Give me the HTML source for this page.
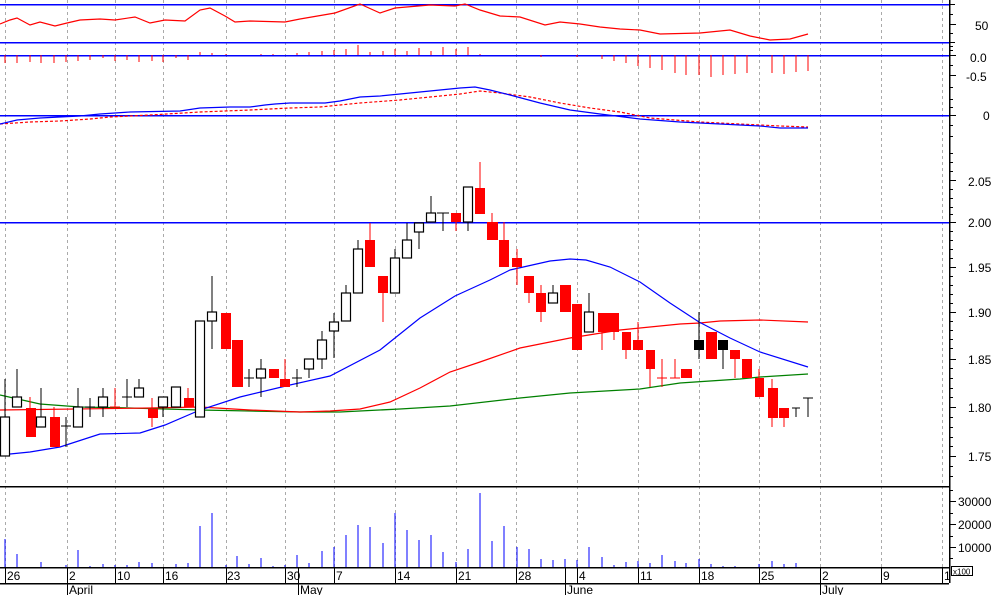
<!DOCTYPE html>
<html><head><meta charset="utf-8"><style>
html,body{margin:0;padding:0;background:#fff;}
svg{display:block;font-family:"Liberation Sans",sans-serif;}
text{font-size:12px;fill:#000;}
</style></head><body>
<svg width="994" height="595" viewBox="0 0 994 595" xmlns="http://www.w3.org/2000/svg">
<!-- grid dashed verticals -->
<g stroke="#aaa" stroke-width="1" stroke-dasharray="3,3" shape-rendering="crispEdges">
<line x1="5.5" y1="0" x2="5.5" y2="567"/><line x1="67.5" y1="0" x2="67.5" y2="567"/><line x1="115.5" y1="0" x2="115.5" y2="567"/><line x1="163.5" y1="0" x2="163.5" y2="567"/><line x1="226.5" y1="0" x2="226.5" y2="567"/><line x1="285.5" y1="0" x2="285.5" y2="567"/><line x1="334.5" y1="0" x2="334.5" y2="567"/><line x1="395.5" y1="0" x2="395.5" y2="567"/><line x1="456.5" y1="0" x2="456.5" y2="567"/><line x1="516.5" y1="0" x2="516.5" y2="567"/><line x1="577.5" y1="0" x2="577.5" y2="567"/><line x1="638.5" y1="0" x2="638.5" y2="567"/><line x1="699.5" y1="0" x2="699.5" y2="567"/><line x1="759.5" y1="0" x2="759.5" y2="567"/><line x1="820.5" y1="0" x2="820.5" y2="567"/><line x1="881.5" y1="0" x2="881.5" y2="567"/><line x1="942.5" y1="0" x2="942.5" y2="567"/>
</g>
<!-- blue horizontal lines -->
<g stroke="#0000ff" stroke-width="1.5" shape-rendering="crispEdges">
<line x1="0" y1="4.5" x2="949" y2="4.5"/><line x1="0" y1="42.5" x2="949" y2="42.5"/><line x1="0" y1="55.5" x2="949" y2="55.5"/><line x1="0" y1="115.5" x2="949" y2="115.5"/><line x1="0" y1="222.5" x2="949" y2="222.5"/>
</g>
<!-- black lines -->
<g stroke="#000" stroke-width="1.5" shape-rendering="crispEdges">
<line x1="0" y1="486.5" x2="949" y2="486.5"/>
<line x1="0" y1="567.5" x2="949" y2="567.5"/>
<line x1="0" y1="583.5" x2="949" y2="583.5"/>
<line x1="949.5" y1="0" x2="949.5" y2="583"/>
</g>
<g stroke="#000" stroke-width="1" shape-rendering="crispEdges">
<!-- date ticks -->
<line x1="5.5" y1="567" x2="5.5" y2="583"/><line x1="67.5" y1="567" x2="67.5" y2="595"/><line x1="115.5" y1="567" x2="115.5" y2="583"/><line x1="163.5" y1="567" x2="163.5" y2="583"/><line x1="226.5" y1="567" x2="226.5" y2="583"/><line x1="285.5" y1="567" x2="285.5" y2="583"/><line x1="298.5" y1="567" x2="298.5" y2="595"/><line x1="334.5" y1="567" x2="334.5" y2="583"/><line x1="395.5" y1="567" x2="395.5" y2="583"/><line x1="456.5" y1="567" x2="456.5" y2="583"/><line x1="516.5" y1="567" x2="516.5" y2="583"/><line x1="565.5" y1="567" x2="565.5" y2="595"/><line x1="577.5" y1="567" x2="577.5" y2="583"/><line x1="638.5" y1="567" x2="638.5" y2="583"/><line x1="699.5" y1="567" x2="699.5" y2="583"/><line x1="759.5" y1="567" x2="759.5" y2="583"/><line x1="820.5" y1="567" x2="820.5" y2="595"/><line x1="881.5" y1="567" x2="881.5" y2="583"/><line x1="942.5" y1="567" x2="942.5" y2="583"/>
<!-- axis ticks -->
<line x1="949" y1="4.5" x2="955" y2="4.5"/><line x1="949" y1="14.5" x2="953" y2="14.5"/><line x1="949" y1="24.5" x2="956" y2="24.5"/><line x1="949" y1="33.5" x2="953" y2="33.5"/><line x1="949" y1="42.5" x2="955" y2="42.5"/><line x1="949" y1="46.5" x2="953" y2="46.5"/><line x1="949" y1="50.5" x2="953" y2="50.5"/>
<line x1="949" y1="55.5" x2="956" y2="55.5"/><line x1="949" y1="65.5" x2="953" y2="65.5"/><line x1="949" y1="75.5" x2="956" y2="75.5"/><line x1="949" y1="87.5" x2="953" y2="87.5"/><line x1="949" y1="99.5" x2="953" y2="99.5"/><line x1="949" y1="107.5" x2="953" y2="107.5"/><line x1="949" y1="115.5" x2="956" y2="115.5"/><line x1="949" y1="125.5" x2="953" y2="125.5"/><line x1="949" y1="136.5" x2="953" y2="136.5"/>
<line x1="949" y1="153.5" x2="953" y2="153.5"/><line x1="949" y1="162.5" x2="953" y2="162.5"/><line x1="949" y1="171.5" x2="953" y2="171.5"/><line x1="949" y1="180.5" x2="956" y2="180.5"/><line x1="949" y1="189.5" x2="953" y2="189.5"/><line x1="949" y1="198.5" x2="953" y2="198.5"/><line x1="949" y1="207.5" x2="953" y2="207.5"/><line x1="949" y1="214.5" x2="953" y2="214.5"/><line x1="949" y1="222.5" x2="956" y2="222.5"/><line x1="949" y1="231.5" x2="953" y2="231.5"/><line x1="949" y1="240.5" x2="953" y2="240.5"/><line x1="949" y1="249.5" x2="953" y2="249.5"/><line x1="949" y1="258.5" x2="953" y2="258.5"/><line x1="949" y1="267.5" x2="956" y2="267.5"/><line x1="949" y1="276.5" x2="953" y2="276.5"/><line x1="949" y1="285.5" x2="953" y2="285.5"/><line x1="949" y1="294.5" x2="953" y2="294.5"/><line x1="949" y1="303.5" x2="953" y2="303.5"/><line x1="949" y1="312.5" x2="956" y2="312.5"/><line x1="949" y1="321.5" x2="953" y2="321.5"/><line x1="949" y1="330.5" x2="953" y2="330.5"/><line x1="949" y1="339.5" x2="953" y2="339.5"/><line x1="949" y1="348.5" x2="953" y2="348.5"/><line x1="949" y1="359.5" x2="956" y2="359.5"/><line x1="949" y1="368.5" x2="953" y2="368.5"/><line x1="949" y1="378.5" x2="953" y2="378.5"/><line x1="949" y1="388.5" x2="953" y2="388.5"/><line x1="949" y1="397.5" x2="953" y2="397.5"/><line x1="949" y1="407.5" x2="956" y2="407.5"/><line x1="949" y1="417.5" x2="953" y2="417.5"/><line x1="949" y1="427.5" x2="953" y2="427.5"/><line x1="949" y1="437.5" x2="953" y2="437.5"/><line x1="949" y1="446.5" x2="953" y2="446.5"/><line x1="949" y1="456.5" x2="956" y2="456.5"/><line x1="949" y1="466.5" x2="953" y2="466.5"/><line x1="949" y1="476.5" x2="953" y2="476.5"/>
<line x1="949" y1="490.5" x2="953" y2="490.5"/><line x1="949" y1="501.5" x2="956" y2="501.5"/><line x1="949" y1="513.5" x2="953" y2="513.5"/><line x1="949" y1="524.5" x2="956" y2="524.5"/><line x1="949" y1="536.5" x2="953" y2="536.5"/><line x1="949" y1="547.5" x2="956" y2="547.5"/><line x1="949" y1="558.5" x2="953" y2="558.5"/>
</g>
<rect x="951.5" y="566.5" width="21" height="9" fill="#fff" stroke="#000" stroke-width="1"/>
<text x="953" y="574.5" style="font-size:8px">x100</text>
<!-- axis labels -->
<g>
<text x="975" y="30">50</text>
<text x="970" y="62">0.0</text>
<text x="966" y="81">-0.5</text>
<text x="983" y="120">0</text>
<text x="968" y="186">2.05</text>
<text x="968" y="227">2.00</text>
<text x="968" y="272">1.95</text>
<text x="968" y="317">1.90</text>
<text x="968" y="364">1.85</text>
<text x="968" y="412">1.80</text>
<text x="968" y="461">1.75</text>
<text x="958" y="506">30000</text>
<text x="958" y="529">20000</text>
<text x="958" y="552">10000</text>
</g>
<!-- date labels -->
<g>
<text x="7" y="580">26</text><text x="69" y="580">2</text><text x="117" y="580">10</text><text x="165" y="580">16</text><text x="227" y="580">23</text><text x="287" y="580">30</text><text x="336" y="580">7</text><text x="397" y="580">14</text><text x="458" y="580">21</text><text x="518" y="580">28</text><text x="579" y="580">4</text><text x="640" y="580">11</text><text x="701" y="580">18</text><text x="761" y="580">25</text><text x="822" y="580">2</text><text x="883" y="580">9</text><text x="944" y="580">1</text>
<text x="69" y="594">April</text><text x="300" y="594">May</text><text x="567" y="594">June</text><text x="822" y="594">July</text>
</g>
<!-- RSI line -->
<polyline fill="none" stroke="#ff0000" stroke-width="1.2" points="0,24 10,20 17,18 30,25 40,22 55,26 67,23 80,20 100,19 115,20 135,17 150,23 165,20 185,21 200,10 210,8 225,16 235,22 250,21 285,22 300,19 335,13 360,4 380,13 395,8 430,5 455,6 465,4 480,10 500,16 520,17 545,25 560,22 580,24 600,27 620,29 640,30 660,34 700,33 730,30 750,36 770,40 790,39 808,34"/>
<!-- histogram -->
<g stroke="#ff0000" stroke-width="1.2" shape-rendering="crispEdges">
<line x1="5" y1="55" x2="5" y2="63"/><line x1="17" y1="55" x2="17" y2="63"/><line x1="30" y1="55" x2="30" y2="62"/><line x1="41" y1="55" x2="41" y2="63"/><line x1="54" y1="55" x2="54" y2="63"/><line x1="66" y1="55" x2="66" y2="62"/><line x1="78" y1="55" x2="78" y2="61"/><line x1="90" y1="55" x2="90" y2="60"/><line x1="103" y1="55" x2="103" y2="58"/><line x1="115" y1="55" x2="115" y2="61"/><line x1="127" y1="55" x2="127" y2="60"/><line x1="139" y1="55" x2="139" y2="62"/><line x1="152" y1="55" x2="152" y2="61"/><line x1="163" y1="55" x2="163" y2="62"/><line x1="176" y1="55" x2="176" y2="58"/><line x1="188" y1="55" x2="188" y2="60"/>
<line x1="200" y1="55" x2="200" y2="52"/><line x1="212" y1="55" x2="212" y2="53"/><line x1="226" y1="55" x2="226" y2="54"/><line x1="261" y1="55" x2="261" y2="54"/><line x1="273" y1="55" x2="273" y2="54"/><line x1="297" y1="55" x2="297" y2="53"/><line x1="309" y1="55" x2="309" y2="52"/><line x1="322" y1="55" x2="322" y2="51"/><line x1="334" y1="55" x2="334" y2="50"/><line x1="346" y1="55" x2="346" y2="49"/><line x1="358" y1="55" x2="358" y2="45"/><line x1="370" y1="55" x2="370" y2="52"/><line x1="383" y1="55" x2="383" y2="51"/><line x1="395" y1="55" x2="395" y2="49"/><line x1="407" y1="55" x2="407" y2="51"/><line x1="419" y1="55" x2="419" y2="48"/><line x1="431" y1="55" x2="431" y2="51"/><line x1="443" y1="55" x2="443" y2="47"/><line x1="456" y1="55" x2="456" y2="49"/><line x1="468" y1="55" x2="468" y2="47"/><line x1="480" y1="55" x2="480" y2="54"/>
<line x1="541" y1="55" x2="541" y2="57"/><line x1="577" y1="55" x2="577" y2="57"/><line x1="602" y1="55" x2="602" y2="59"/><line x1="614" y1="55" x2="614" y2="61"/><line x1="626" y1="55" x2="626" y2="63"/><line x1="638" y1="55" x2="638" y2="66"/><line x1="650" y1="55" x2="650" y2="68"/><line x1="662" y1="55" x2="662" y2="70"/><line x1="675" y1="55" x2="675" y2="73"/><line x1="686" y1="55" x2="686" y2="75"/><line x1="699" y1="55" x2="699" y2="75"/><line x1="711" y1="55" x2="711" y2="77"/><line x1="723" y1="55" x2="723" y2="75"/><line x1="735" y1="55" x2="735" y2="74"/><line x1="747" y1="55" x2="747" y2="73"/><line x1="772" y1="55" x2="772" y2="73"/><line x1="784" y1="55" x2="784" y2="74"/><line x1="796" y1="55" x2="796" y2="72"/><line x1="808" y1="55" x2="808" y2="71"/>
</g>
<!-- MACD lines -->
<polyline fill="none" stroke="#ff0000" stroke-width="1.2" stroke-dasharray="3,2" points="0,124 30,122 60,121 90,119 110,117 150,115 200,112 250,110 290,108 320,107 340,105 360,103 400,100 430,97 460,94 480,91 500,93 530,97 560,103 590,108 620,112 650,118 700,122 740,124 780,126 808,127"/>
<polyline fill="none" stroke="#0000ff" stroke-width="1.2" points="0,124 17,120 40,118 60,117 80,116 100,114 130,112 180,111 200,108 230,107 250,107 265,105 275,104 290,103 325,103 340,101 360,97 380,96 400,94 420,92 440,90 460,88 475,87 490,90 510,95 540,103 570,110 600,114 640,119 680,122 720,124 760,126 780,128 808,128"/>
<!-- MAs -->
<polyline fill="none" stroke="#008000" stroke-width="1.3" points="0,395 40,404 80,407 130,408 200,410 250,411 300,412 340,412 400,409 450,406 520,398 570,393 640,389 680,383 740,379 760,377 808,374"/>
<polyline fill="none" stroke="#ff0000" stroke-width="1.2" points="0,410 150,408 200,407 250,410 300,412 330,411 360,409 390,402 420,388 450,372 480,362 520,348 570,338 620,330 680,324 700,323 720,321 760,320 808,322"/>
<polyline fill="none" stroke="#0000ff" stroke-width="1.2" points="0,455 30,452 60,447 100,434 140,433 165,425 200,410 240,397 290,385 330,376 380,350 420,318 455,296 490,280 510,270 550,261 570,259 586,260 610,267 640,282 670,303 699,322 730,338 760,352 808,367"/>
<!-- candles: wicks -->
<g stroke="#000" stroke-width="1.2" shape-rendering="crispEdges">
<line x1="5" y1="379" x2="5" y2="456"/><line x1="17" y1="369" x2="17" y2="407"/><line x1="41" y1="388" x2="41" y2="427"/><line x1="66" y1="417" x2="66" y2="447"/><line x1="61" y1="426" x2="71" y2="426"/><line x1="78" y1="388" x2="78" y2="427"/><line x1="90" y1="398" x2="90" y2="417"/><line x1="85" y1="407" x2="95" y2="407"/><line x1="103" y1="388" x2="103" y2="417"/><line x1="127" y1="379" x2="127" y2="407"/><line x1="122" y1="397" x2="132" y2="397"/><line x1="139" y1="379" x2="139" y2="397"/><line x1="163" y1="397" x2="163" y2="417"/><line x1="212" y1="276" x2="212" y2="349"/><line x1="249" y1="369" x2="249" y2="387"/><line x1="244" y1="378" x2="254" y2="378"/><line x1="261" y1="359" x2="261" y2="397"/><line x1="297" y1="369" x2="297" y2="387"/><line x1="292" y1="378" x2="302" y2="378"/><line x1="309" y1="359" x2="309" y2="378"/><line x1="322" y1="331" x2="322" y2="369"/><line x1="334" y1="313" x2="334" y2="358"/><line x1="346" y1="285" x2="346" y2="321"/><line x1="358" y1="240" x2="358" y2="293"/><line x1="395" y1="249" x2="395" y2="293"/><line x1="407" y1="223" x2="407" y2="258"/><line x1="419" y1="223" x2="419" y2="249"/><line x1="431" y1="196" x2="431" y2="222"/><line x1="443" y1="213" x2="443" y2="231"/><line x1="437" y1="213" x2="449" y2="213"/><line x1="468" y1="187" x2="468" y2="231"/><line x1="553" y1="285" x2="553" y2="303"/><line x1="589" y1="293" x2="589" y2="332"/><line x1="699" y1="312" x2="699" y2="359"/><line x1="723" y1="340" x2="723" y2="369"/><line x1="796" y1="408" x2="796" y2="417"/><line x1="792" y1="408" x2="800" y2="408"/><line x1="808" y1="398" x2="808" y2="417"/><line x1="803" y1="398" x2="813" y2="398"/>
</g>
<g stroke="#ff0000" stroke-width="1.2" shape-rendering="crispEdges">
<line x1="30" y1="397" x2="30" y2="437"/><line x1="54" y1="407" x2="54" y2="447"/><line x1="115" y1="388" x2="115" y2="408"/><line x1="110" y1="407" x2="120" y2="407"/><line x1="152" y1="398" x2="152" y2="427"/><line x1="188" y1="388" x2="188" y2="407"/><line x1="285" y1="359" x2="285" y2="387"/><line x1="370" y1="223" x2="370" y2="267"/><line x1="383" y1="276" x2="383" y2="322"/><line x1="456" y1="213" x2="456" y2="231"/><line x1="480" y1="162" x2="480" y2="214"/><line x1="492" y1="213" x2="492" y2="240"/><line x1="504" y1="222" x2="504" y2="267"/><line x1="517" y1="249" x2="517" y2="285"/><line x1="529" y1="276" x2="529" y2="303"/><line x1="541" y1="285" x2="541" y2="322"/><line x1="602" y1="313" x2="602" y2="350"/><line x1="614" y1="313" x2="614" y2="340"/><line x1="626" y1="332" x2="626" y2="359"/><line x1="638" y1="322" x2="638" y2="350"/><line x1="650" y1="350" x2="650" y2="387"/><line x1="662" y1="359" x2="662" y2="387"/><line x1="657" y1="378" x2="667" y2="378"/><line x1="675" y1="359" x2="675" y2="378"/><line x1="670" y1="378" x2="680" y2="378"/><line x1="711" y1="332" x2="711" y2="359"/><line x1="735" y1="350" x2="735" y2="378"/><line x1="759" y1="369" x2="759" y2="397"/><line x1="772" y1="379" x2="772" y2="427"/><line x1="784" y1="408" x2="784" y2="427"/>
</g>
<!-- red bodies -->
<g fill="#ff0000">
<rect x="26" y="408" width="10" height="29"/><rect x="50" y="417" width="10" height="30"/><rect x="148" y="409" width="10" height="9"/><rect x="184" y="398" width="10" height="9"/><rect x="221" y="313" width="10" height="36"/><rect x="232" y="340" width="11" height="47"/><rect x="269" y="369" width="10" height="9"/><rect x="280" y="379" width="10" height="8"/><rect x="365" y="240" width="10" height="27"/><rect x="378" y="276" width="10" height="17"/><rect x="451" y="213" width="10" height="9"/><rect x="475" y="188" width="10" height="26"/><rect x="487" y="222" width="11" height="18"/><rect x="499" y="240" width="10" height="27"/><rect x="512" y="258" width="10" height="9"/><rect x="524" y="276" width="10" height="17"/><rect x="536" y="293" width="10" height="19"/><rect x="560" y="285" width="11" height="27"/><rect x="572" y="304" width="10" height="46"/><rect x="598" y="313" width="21" height="19"/><rect x="622" y="332" width="9" height="18"/><rect x="633" y="340" width="10" height="10"/><rect x="646" y="350" width="9" height="19"/><rect x="681" y="369" width="11" height="9"/><rect x="706" y="332" width="11" height="27"/><rect x="730" y="350" width="10" height="9"/><rect x="742" y="359" width="10" height="19"/><rect x="755" y="378" width="9" height="19"/><rect x="768" y="388" width="10" height="30"/><rect x="779" y="408" width="10" height="10"/>
</g>
<!-- black bodies -->
<g fill="#000"><rect x="694" y="340" width="10" height="10"/><rect x="718" y="340" width="10" height="10"/></g>
<!-- white bodies -->
<g fill="#fff" stroke="#000" stroke-width="1.2">
<rect x="0.5" y="417" width="9" height="39"/><rect x="12.5" y="397" width="9" height="10"/><rect x="36.5" y="417" width="9" height="10"/><rect x="73.5" y="407" width="9" height="20"/><rect x="98.5" y="397" width="9" height="10"/><rect x="134.5" y="388" width="9" height="9"/><rect x="158.5" y="397" width="9" height="10"/><rect x="171.5" y="387" width="9" height="20"/><rect x="195.5" y="321" width="9" height="96"/><rect x="207.5" y="312" width="9" height="9"/><rect x="256.5" y="369" width="9" height="9"/><rect x="304.5" y="359" width="9" height="10"/><rect x="317.5" y="340" width="9" height="19"/><rect x="329.5" y="322" width="9" height="9"/><rect x="341.5" y="293" width="9" height="28"/><rect x="353.5" y="249" width="9" height="44"/><rect x="390.5" y="258" width="9" height="35"/><rect x="402.5" y="240" width="9" height="18"/><rect x="414.5" y="223" width="9" height="9"/><rect x="426.5" y="213" width="9" height="9"/><rect x="463.5" y="187" width="9" height="35"/><rect x="548.5" y="293" width="9" height="10"/><rect x="584.5" y="312" width="9" height="20"/>
</g>
<!-- volume -->
<g stroke="#0000ff" stroke-width="1.3" shape-rendering="crispEdges">
<line x1="5" y1="567" x2="5" y2="539"/><line x1="17" y1="567" x2="17" y2="554"/><line x1="41" y1="567" x2="41" y2="562"/><line x1="66" y1="567" x2="66" y2="565"/><line x1="78" y1="567" x2="78" y2="550"/><line x1="90" y1="567" x2="90" y2="566"/><line x1="103" y1="567" x2="103" y2="564"/><line x1="115" y1="567" x2="115" y2="565"/><line x1="127" y1="567" x2="127" y2="565"/><line x1="139" y1="567" x2="139" y2="562"/><line x1="152" y1="567" x2="152" y2="563"/><line x1="176" y1="567" x2="176" y2="564"/><line x1="188" y1="567" x2="188" y2="563"/><line x1="200" y1="567" x2="200" y2="526"/><line x1="212" y1="567" x2="212" y2="513"/><line x1="226" y1="567" x2="226" y2="565"/><line x1="237" y1="567" x2="237" y2="556"/><line x1="249" y1="567" x2="249" y2="564"/><line x1="261" y1="567" x2="261" y2="558"/><line x1="273" y1="567" x2="273" y2="566"/><line x1="285" y1="567" x2="285" y2="565"/><line x1="297" y1="567" x2="297" y2="555"/><line x1="309" y1="567" x2="309" y2="563"/><line x1="322" y1="567" x2="322" y2="551"/><line x1="334" y1="567" x2="334" y2="547"/><line x1="346" y1="567" x2="346" y2="535"/><line x1="358" y1="567" x2="358" y2="525"/><line x1="370" y1="567" x2="370" y2="527"/><line x1="383" y1="567" x2="383" y2="543"/><line x1="395" y1="567" x2="395" y2="513"/><line x1="407" y1="567" x2="407" y2="530"/><line x1="419" y1="567" x2="419" y2="540"/><line x1="431" y1="567" x2="431" y2="535"/><line x1="443" y1="567" x2="443" y2="552"/><line x1="456" y1="567" x2="456" y2="562"/><line x1="468" y1="567" x2="468" y2="549"/><line x1="480" y1="567" x2="480" y2="493"/><line x1="492" y1="567" x2="492" y2="541"/><line x1="504" y1="567" x2="504" y2="526"/><line x1="517" y1="567" x2="517" y2="547"/><line x1="529" y1="567" x2="529" y2="549"/><line x1="541" y1="567" x2="541" y2="559"/><line x1="553" y1="567" x2="553" y2="560"/><line x1="565" y1="567" x2="565" y2="559"/><line x1="577" y1="567" x2="577" y2="560"/><line x1="589" y1="567" x2="589" y2="547"/><line x1="602" y1="567" x2="602" y2="557"/><line x1="614" y1="567" x2="614" y2="565"/><line x1="626" y1="567" x2="626" y2="562"/><line x1="638" y1="567" x2="638" y2="561"/><line x1="650" y1="567" x2="650" y2="563"/><line x1="662" y1="567" x2="662" y2="555"/><line x1="675" y1="567" x2="675" y2="561"/><line x1="686" y1="567" x2="686" y2="563"/><line x1="699" y1="567" x2="699" y2="559"/><line x1="711" y1="567" x2="711" y2="564"/><line x1="723" y1="567" x2="723" y2="566"/><line x1="735" y1="567" x2="735" y2="566"/><line x1="759" y1="567" x2="759" y2="564"/><line x1="772" y1="567" x2="772" y2="561"/><line x1="784" y1="567" x2="784" y2="564"/><line x1="796" y1="567" x2="796" y2="563"/>
</g>
</svg>
</body></html>
